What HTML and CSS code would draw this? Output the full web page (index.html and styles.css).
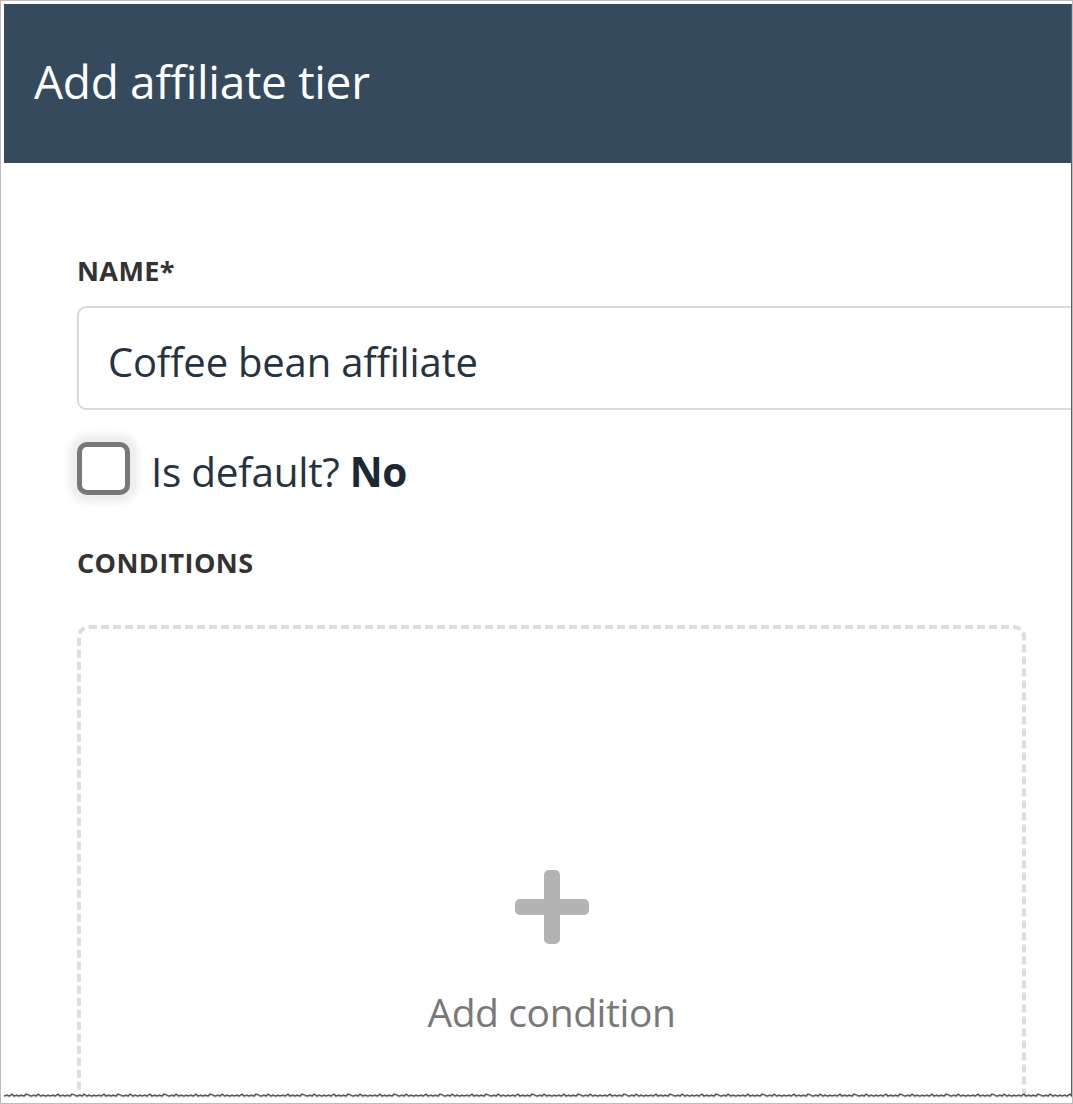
FILE: index.html
```html
<!DOCTYPE html>
<html lang="en">
<head>
<meta charset="utf-8">
<title>Add affiliate tier</title>
<link rel="stylesheet" href="styles.css">
</head>
<body>
<div class="frame">
  <div class="shot">
    <div class="dialog">
      <header class="dlg-head">
        <h1 class="dlg-title">Add affiliate tier</h1>
      </header>
      <main class="dlg-body">
        <label class="field-label" for="tier-name">NAME*</label>
        <input class="text-input" id="tier-name" type="text" value="Coffee bean affiliate">
        <div class="check-row">
          <span class="check-box"></span>
          <span class="check-text">Is default? <b class="check-value">No</b></span>
        </div>
        <div class="field-label section-label">CONDITIONS</div>
        <div class="drop-zone">
          <svg class="plus-icon" width="74" height="74" viewBox="0 0 74 74" aria-hidden="true">
            <rect x="29" y="0" width="16" height="74" rx="5" fill="#b3b3b3"/>
            <rect x="0" y="29" width="74" height="16" rx="5" fill="#b3b3b3"/>
          </svg>
          <div class="drop-text">Add condition</div>
        </div>
      </main>
    </div>
    <svg class="torn" width="1069" height="12" aria-hidden="true">
      <defs>
        <pattern id="tear" x="0" y="0" width="46" height="12" patternUnits="userSpaceOnUse">
          <path d="M0 5 L3 4 L5 5 L8 3 L10 5 L13 4 L15 5 L17 4 L20 5 L22 3 L25 4 L27 5 L30 4 L32 5 L34 3 L37 5 L39 4 L42 5 L44 4 L46 5 L46 12 L0 12 Z" fill="#ffffff"/>
          <path d="M0 6 L3 5 L5 6 L8 4 L10 6 L13 5 L15 6 L17 5 L20 6 L22 4 L25 5 L27 6 L30 5 L32 6 L34 4 L37 6 L39 5 L42 6 L44 5 L46 6" fill="none" stroke="#c4c4c4" stroke-width="1.2"/>
          <path d="M0 5 L3 4 L5 5 L8 3 L10 5 L13 4 L15 5 L17 4 L20 5 L22 3 L25 4 L27 5 L30 4 L32 5 L34 3 L37 5 L39 4 L42 5 L44 4 L46 5" fill="none" stroke="#4a4a4a" stroke-width="1.3"/>
        </pattern>
      </defs>
      <rect x="0" y="0" width="1069" height="12" fill="url(#tear)"/>
    </svg>
  </div>
</div>
</body>
</html>
```
FILE: styles.css
```css
* { box-sizing: border-box; }

html, body {
  margin: 0;
  padding: 0;
  background: #ffffff;
}

.frame {
  width: 1073px;
  height: 1104px;
  border: 1px solid #bcbcbc;
  background: #ffffff;
  padding: 3px 0 0 3px;
  overflow: hidden;
}

.shot {
  position: relative;
  width: 1069px;
  height: 1099px;
  overflow: hidden;
  background: #ffffff;
  font-family: "Open Sans", "Noto Sans", "Liberation Sans", sans-serif;
}

.dialog {
  width: 1067px;
  height: 100%;
  border-right: 2px solid #5e5e5e;
  box-sizing: content-box;
  overflow: hidden;
}

.dlg-head {
  height: 159px;
  background: #364a5e;
  display: flex;
  align-items: center;
  padding-left: 30px;
}

.dlg-title {
  margin: 0;
  font-weight: 400;
  font-size: 46px;
  line-height: 1;
  color: #ffffff;
  letter-spacing: -0.3px;
  position: relative;
  top: -3px;
}

.dlg-body {
  padding: 0 0 0 73px;
}

.field-label {
  display: block;
  margin-top: 93px;
  font-weight: 700;
  font-size: 27px;
  line-height: 30px;
  color: #333333;
  letter-spacing: 0.4px;
}

.text-input {
  display: block;
  margin-top: 20px;
  width: 1100px;
  height: 104px;
  border: 2px solid #dadada;
  border-radius: 9px;
  padding: 6px 0 0 29px;
  font-family: inherit;
  font-size: 40px;
  color: #263340;
  letter-spacing: -0.2px;
  background: #ffffff;
  outline: none;
}

.check-row {
  display: flex;
  align-items: center;
  margin-top: 32px;
  height: 53px;
}

.check-box {
  width: 53px;
  height: 53px;
  border: 5px solid #787878;
  border-radius: 10px;
  background: #ffffff;
  box-shadow: 0 0 7px 8px rgba(0, 0, 0, 0.07);
  flex: none;
}

.check-text {
  margin-left: 21px;
  font-size: 40.5px;
  line-height: 53px;
  color: #263340;
  letter-spacing: -0.3px;
  position: relative;
  top: 3px;
}

.check-value {
  font-weight: 700;
  color: #1c2836;
}

.section-label {
  margin-top: 53px;
}

.drop-zone {
  margin-top: 47px;
  width: 949px;
  height: 520px;
  border: 4px dashed #dddddd;
  border-radius: 12px;
  display: flex;
  flex-direction: column;
  align-items: center;
  padding-top: 241px;
}

.plus-icon {
  display: block;
}

.drop-text {
  margin-top: 43px;
  font-size: 39px;
  line-height: 50px;
  color: #787878;
  letter-spacing: -0.4px;
}

.torn {
  position: absolute;
  left: 0;
  bottom: 0;
  display: block;
}
```
